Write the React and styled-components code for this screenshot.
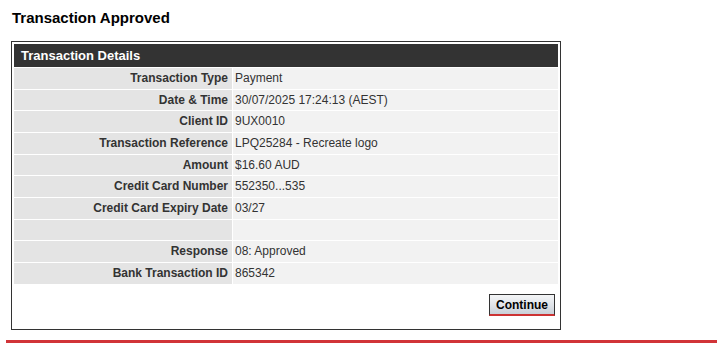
import React from 'react';
import styled, { createGlobalStyle } from 'styled-components';

const GlobalStyle = createGlobalStyle`
  html, body {
    margin: 0;
    padding: 0;
    background: #fff;
  }
  body {
    font-family: "Liberation Sans", Arial, sans-serif;
    color: #333;
  }
`;

const Page = styled.div`
  padding: 9px 0 0 6px;
`;

const Content = styled.div`
  padding: 0 0 0 5px;
  width: 550px;
`;

const Title = styled.h1`
  margin: 0 0 14px 1px;
  font-size: 15px;
  line-height: 18px;
  font-weight: bold;
  color: #000;
`;

const Panel = styled.div`
  border: 1px solid #333;
  padding: 2px 2px 13px;
`;

const DetailsTable = styled.table`
  width: 100%;
  border-collapse: separate;
  border-spacing: 0 1px;
  margin-top: -1px;
  font-size: 12px;
`;

const HeaderCell = styled.th`
  background: #333;
  color: #fff;
  text-align: left;
  font-size: 13px;
  font-weight: bold;
  line-height: 16px;
  padding: 4px 7px 3px;
`;

const LabelCell = styled.td`
  background: #e4e4e4;
  text-align: right;
  font-weight: bold;
  color: #333;
  width: 214px;
  padding: 3px 4px 3px 0;
  line-height: 14.67px;
  border-right: 1px solid #fff;
`;

const ValueCell = styled.td`
  background: #f2f2f2;
  color: #333;
  padding: 3px 3px 3px 2px;
  line-height: 14.67px;
`;

const Actions = styled.div`
  display: flex;
  justify-content: flex-end;
  padding: 9px 3px 0 0;
`;

const Button = styled.button`
  font-family: "Liberation Sans", Arial, sans-serif;
  font-size: 12px;
  font-weight: bold;
  color: #000;
  padding: 2px 6px 1px;
  height: 22px;
  border: 1px solid #333;
  border-bottom: 2px solid #cc3333;
  background: linear-gradient(to bottom, #f4f5f7 0%, #dfe3e8 55%, #c9d0d8 100%);
  cursor: pointer;
`;

const RedRule = styled.div`
  height: 4px;
  background: #d13438;
  margin-top: 10px;
`;

const rows = [
  ['Transaction Type', 'Payment'],
  ['Date & Time', '30/07/2025 17:24:13 (AEST)'],
  ['Client ID', '9UX0010'],
  ['Transaction Reference', 'LPQ25284 - Recreate logo'],
  ['Amount', '$16.60 AUD'],
  ['Credit Card Number', '552350...535'],
  ['Credit Card Expiry Date', '03/27'],
  ['', ''],
  ['Response', '08: Approved'],
  ['Bank Transaction ID', '865342'],
];

export default function App() {
  return (
    <>
      <GlobalStyle />
      <Page>
        <Content>
          <Title>Transaction Approved</Title>
          <Panel>
            <DetailsTable>
              <thead>
                <tr>
                  <HeaderCell colSpan={2}>Transaction Details</HeaderCell>
                </tr>
              </thead>
              <tbody>
                {rows.map(([label, value], i) => (
                  <tr key={i}>
                    <LabelCell>{label || '\u00a0'}</LabelCell>
                    <ValueCell>{value || '\u00a0'}</ValueCell>
                  </tr>
                ))}
              </tbody>
            </DetailsTable>
            <Actions>
              <Button type="button">Continue</Button>
            </Actions>
          </Panel>
        </Content>
        <RedRule />
      </Page>
    </>
  );
}
